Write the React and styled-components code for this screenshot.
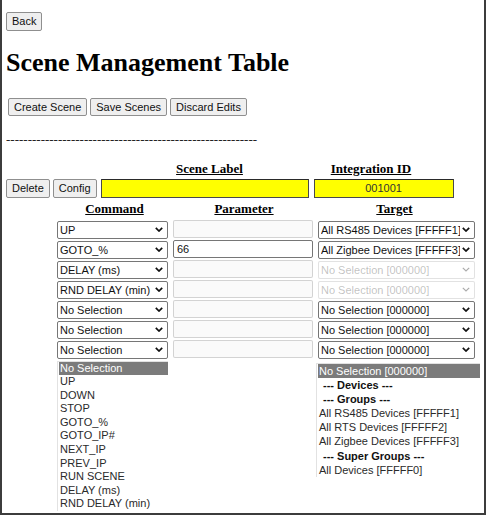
import React from 'react';
import styled, { createGlobalStyle } from 'styled-components';

const Global = createGlobalStyle`
  html, body { margin: 0; padding: 0; background: #fff; }
  body { font-family: "Liberation Serif", "Times New Roman", serif; color: #000; }
`;

const Frame = styled.div`
  box-sizing: border-box;
  width: 486px;
  height: 515px;
  border: 2px solid #3c3c3c;
  border-top: none;
  padding: 11px 0 0 4px;
  overflow: hidden;
`;

const Btn = styled.button`
  box-sizing: border-box;
  font: 11px "Liberation Sans", Arial, sans-serif;
  height: ${p => p.$h || 19}px;
  padding: 0 5px;
  border: 1px solid #8f8f8f;
  border-radius: 2px;
  background: #efefef;
  color: #111;
`;

const Title = styled.h1`
  font-family: "Liberation Serif", "Times New Roman", serif;
  font-weight: bold;
  font-size: 26px;
  line-height: 30px;
  margin: 17px 0 20px 0;
`;

const BtnRow = styled.div`
  display: flex;
  gap: 3px;
  margin-left: 2px;
`;

const Dashes = styled.div`
  font-family: "Liberation Serif", "Times New Roman", serif;
  font-size: 13px;
  line-height: 15px;
  margin-top: 16px;
  color: #222;
`;

const HeadRow = styled.div`
  display: flex;
  margin-top: ${p => p.$mt}px;
  margin-left: ${p => p.$ml}px;
`;

const Head = styled.div`
  width: ${p => p.$w}px;
  text-align: center;
  font-family: "Liberation Serif", "Times New Roman", serif;
  font-weight: bold;
  font-size: 13px;
  line-height: 15px;
  text-decoration: underline;
`;

const CtrlRow = styled.div`
  display: flex;
  align-items: center;
  gap: ${p => p.$gap || 4}px;
  margin-left: ${p => p.$ml || 0}px;
  margin-top: ${p => p.$mt || 0}px;
`;

const YellowInput = styled.input`
  box-sizing: border-box;
  width: ${p => p.$w}px;
  height: 19px;
  background: #ffff00;
  border: 1px solid #4a4a4a;
  border-top-color: #2a2a2a;
  font: 11px "Liberation Sans", Arial, sans-serif;
  color: #333;
  text-align: ${p => p.$center ? 'center' : 'left'};
  padding: 0 3px;
  margin-left: ${p => p.$ml || 0}px;
`;

const SelWrap = styled.div`
  position: relative;
  width: ${p => p.$w}px;
  height: 18px;
  flex: none;
`;

const Sel = styled.select`
  appearance: none;
  -webkit-appearance: none;
  box-sizing: border-box;
  width: 100%;
  height: 18px;
  font: 11px "Liberation Sans", Arial, sans-serif;
  color: #111;
  border: 1px solid #767676;
  border-radius: 2px;
  background: #fff;
  padding: 0 14px 0 2px;
  margin: 0;
  &:disabled {
    color: rgba(16, 16, 16, 0.38);
    border-color: rgba(118, 118, 118, 0.3);
  }
`;

const Chevron = styled.svg`
  position: absolute;
  right: 5px;
  top: 7px;
  width: 8px;
  height: 5px;
  pointer-events: none;
  stroke: ${p => p.$off ? 'rgba(16,16,16,0.35)' : '#111'};
  stroke-width: ${p => p.$off ? 1.2 : 1.7};
  fill: none;
`;

const Param = styled.input`
  box-sizing: border-box;
  width: 140px;
  height: 18px;
  font: 11px "Liberation Sans", Arial, sans-serif;
  color: #111;
  border: 1px solid #767676;
  border-radius: 2px;
  padding: 0 3px;
  &:disabled {
    background: rgba(239, 239, 239, 0.3);
    border-color: rgba(118, 118, 118, 0.3);
  }
`;

const Rows = styled.div`
  display: flex;
  flex-direction: column;
  gap: 2px;
  margin-top: 4px;
`;

const ListArea = styled.div`
  display: flex;
  align-items: flex-start;
  margin-left: 51px;
  margin-top: 3px;
`;

const ListBox = styled.div`
  box-sizing: border-box;
  width: ${p => p.$w}px;
  margin-left: ${p => p.$ml || 0}px;
  margin-top: ${p => p.$mt || 0}px;
  border: 1px solid #e2e2e2;
  border-right: none;
  border-bottom: none;
  padding-left: 1px;
  font: 11px "Liberation Sans", Arial, sans-serif;
  color: #222;
`;

const Opt = styled.div`
  height: ${p => p.$lh}px;
  line-height: ${p => p.$lh}px;
  padding-left: ${p => p.$bold ? 5 : 1}px;
  white-space: nowrap;
  font-weight: ${p => p.$bold ? 'bold' : 'normal'};
  background: ${p => p.$sel ? '#7b7b7b' : 'transparent'};
  color: ${p => p.$sel ? '#fff' : p.$bold ? '#111' : '#2a2a2a'};
`;

const commands = ['No Selection', 'UP', 'DOWN', 'STOP', 'GOTO_%', 'GOTO_IP#', 'NEXT_IP', 'PREV_IP', 'RUN SCENE', 'DELAY (ms)', 'RND DELAY (min)'];
const targets = [
  { t: 'No Selection [000000]' },
  { t: '--- Devices ---', b: true },
  { t: '--- Groups ---', b: true },
  { t: 'All RS485 Devices [FFFFF1]' },
  { t: 'All RTS Devices [FFFFF2]' },
  { t: 'All Zigbee Devices [FFFFF3]' },
  { t: '--- Super Groups ---', b: true },
  { t: 'All Devices [FFFFF0]' },
];

const rows = [
  { c: 'UP', p: '', pd: true, t: 'All RS485 Devices [FFFFF1]', td: false },
  { c: 'GOTO_%', p: '66', pd: false, t: 'All Zigbee Devices [FFFFF3]', td: false },
  { c: 'DELAY (ms)', p: '', pd: true, t: 'No Selection [000000]', td: true },
  { c: 'RND DELAY (min)', p: '', pd: true, t: 'No Selection [000000]', td: true },
  { c: 'No Selection', p: '', pd: true, t: 'No Selection [000000]', td: false },
  { c: 'No Selection', p: '', pd: true, t: 'No Selection [000000]', td: false },
  { c: 'No Selection', p: '', pd: true, t: 'No Selection [000000]', td: false },
];

function Select({ w, value, options, disabled }) {
  return (
    <SelWrap $w={w}>
      <Sel disabled={disabled} defaultValue={value}>
        {options.map(o => <option key={o}>{o}</option>)}
      </Sel>
      <Chevron $off={disabled} viewBox="0 0 8 5">
        <polyline points="0.8,0.8 4,4 7.2,0.8" />
      </Chevron>
    </SelWrap>
  );
}

export default function App() {
  return (
    <>
      <Global />
      <Frame>
        <Btn>Back</Btn>
        <Title>Scene Management Table</Title>
        <BtnRow>
          <Btn $h={18}>Create Scene</Btn>
          <Btn $h={18}>Save Scenes</Btn>
          <Btn $h={18}>Discard Edits</Btn>
        </BtnRow>
        <Dashes>{'-'.repeat(58)}</Dashes>
        <HeadRow $mt={14} $ml={97}>
          <Head $w={213}>Scene Label</Head>
          <Head $w={110}>Integration ID</Head>
        </HeadRow>
        <CtrlRow $gap={3} $mt={3}>
          <Btn>Delete</Btn>
          <Btn>Config</Btn>
          <YellowInput $w={208} $ml={1} defaultValue="" />
          <YellowInput $w={140} $ml={2} $center defaultValue="001001" />
        </CtrlRow>
        <HeadRow $mt={3} $ml={51}>
          <Head $w={115}>Command</Head>
          <Head $w={144}>Parameter</Head>
          <Head $w={157}>Target</Head>
        </HeadRow>
        <Rows>
          {rows.map((r, i) => (
            <CtrlRow key={i} $ml={51} $gap={5}>
              <Select w={111} value={r.c} options={commands} />
              <Param disabled={r.pd} defaultValue={r.p} />
              <Select w={157} value={r.t} options={targets.map(t => t.t)} disabled={r.td} />
            </CtrlRow>
          ))}
        </Rows>
        <ListArea>
          <ListBox $w={111}>
            {commands.map((c, i) => <Opt key={c} $lh={13.6} $sel={i === 0}>{c}</Opt>)}
          </ListBox>
          <ListBox $w={164} $ml={148} $mt={2}>
            {targets.map((t, i) => <Opt key={t.t} $lh={14.2} $bold={t.b} $sel={i === 0}>{t.t}</Opt>)}
          </ListBox>
        </ListArea>
      </Frame>
    </>
  );
}
